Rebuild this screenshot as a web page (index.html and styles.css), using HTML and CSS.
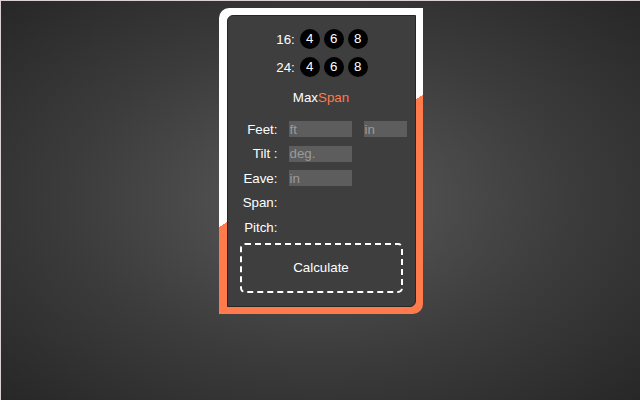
FILE: index.html
```html
<!DOCTYPE html>
<html>
<head>
<meta charset="utf-8">
<link rel="stylesheet" href="styles.css">
</head>
<body>
<div class="page">
  <div class="card">
    <div class="panel">
      <div class="sizes">
        <span class="lbl">16:</span>
        <span class="dot">4</span><span class="dot">6</span><span class="dot">8</span>
      </div>
      <div class="sizes second">
        <span class="lbl">24:</span>
        <span class="dot">4</span><span class="dot">6</span><span class="dot">8</span>
      </div>
      <div class="title">Max<span class="accent">Span</span></div>
      <div class="form">
        <div class="row"><span class="label">Feet:</span><input class="field wide" placeholder="ft"><input class="field narrow" placeholder="in"></div>
        <div class="row"><span class="label">Tilt :</span><input class="field wide" placeholder="deg."></div>
        <div class="row"><span class="label">Eave:</span><input class="field wide" placeholder="in"></div>
        <div class="row"><span class="label">Span:</span></div>
        <div class="row"><span class="label">Pitch:</span></div>
      </div>
      <button class="calc">Calculate</button>
    </div>
  </div>
</div>
</body>
</html>
```
FILE: styles.css
```css
html, body {
  margin: 0;
  padding: 0;
}
body {
  font-family: "Liberation Sans", Arial, sans-serif;
  font-size: 10pt;
  color: #fff;
}
.page {
  width: 639px;
  height: 399px;
  border-top: 1px solid #ddd0d3;
  border-left: 1px solid #ddd0d3;
  background: radial-gradient(ellipse at 50% 50%, #5a5a5a 0%, #3c3c3c 55%, #272727 100%);
  display: flex;
  justify-content: center;
  align-items: flex-start;
}
.card {
  margin-top: 7px;
  width: 204px;
  height: 306px;
  box-sizing: border-box;
  padding: 7px 7px 7px 8px;
  border-radius: 10px 0 10px 0;
  background: linear-gradient(147deg, #ffffff 50%, #ff7b4b 50%);
  display: flex;
}
.panel {
  flex: 1;
  background: #3e3e3e;
  border: 1px solid #262626;
  border-radius: 6px 0 6px 0;
  display: flex;
  flex-direction: column;
  padding-top: 13px;
}
.sizes {
  display: flex;
  justify-content: center;
  align-items: center;
  gap: 4px;
  height: 20px;
  padding-left: 2px;
}
.sizes.second {
  margin-top: 8px;
}
.lbl {
  margin-right: 1px;
}
.dot {
  width: 20px;
  height: 20px;
  border-radius: 50%;
  background: #000;
  display: flex;
  align-items: center;
  justify-content: center;
  color: #fff;
  line-height: 1;
}
.title {
  margin-top: 13px;
  height: 16px;
  line-height: 16px;
  text-align: center;
}
.accent {
  color: #ff7b4b;
}
.form {
  margin-top: 11px;
  display: flex;
  flex-direction: column;
}
.row {
  height: 24.5px;
  display: flex;
  align-items: center;
}
.label {
  width: 50px;
  text-align: right;
  margin-right: 11px;
}
.field {
  height: 16px;
  box-sizing: border-box;
  border: none;
  outline: none;
  background: #5d5d5d;
  color: #ddd;
  font-family: "Liberation Sans", Arial, sans-serif;
  font-size: 10pt;
  padding: 0 1px;
  margin: 0;
}
.field::placeholder {
  color: #9a9a9a;
}
.wide {
  width: 63px;
}
.narrow {
  width: 43px;
  margin-left: 12px;
}
.calc {
  margin: 3px 12px 0 12px;
  height: 50px;
  background: transparent;
  border: 2px dashed #fff;
  border-radius: 5px;
  color: #fff;
  font-family: "Liberation Sans", Arial, sans-serif;
  font-size: 10pt;
  padding: 0;
}
```
